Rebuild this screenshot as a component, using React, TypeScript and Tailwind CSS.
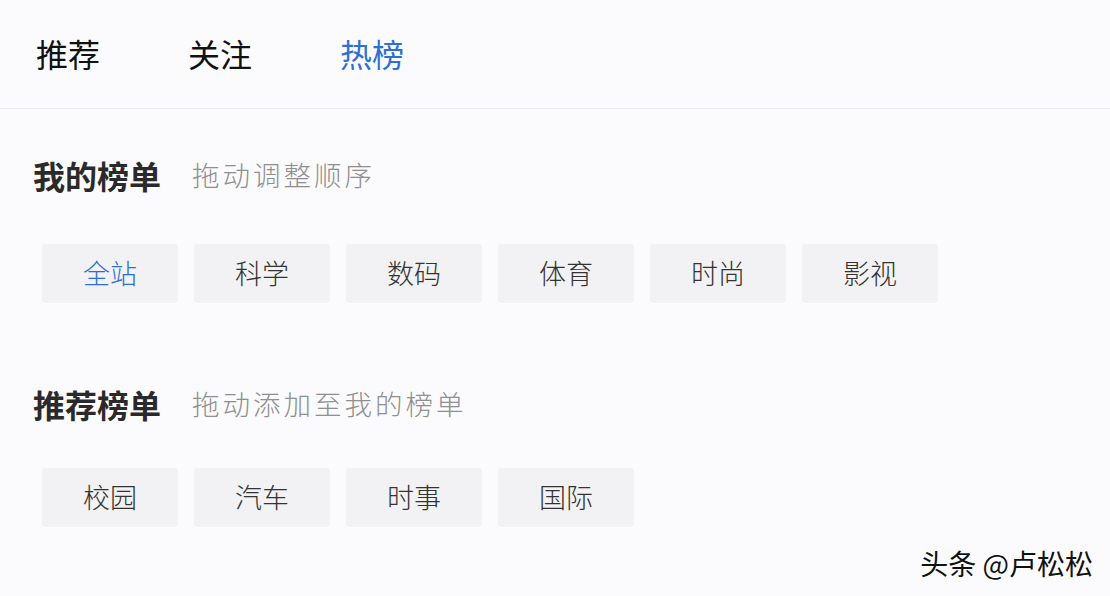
const tabs = [
  { label: "推荐", active: false },
  { label: "关注", active: false },
  { label: "热榜", active: true },
];

const mine = ["全站", "科学", "数码", "体育", "时尚", "影视"];
const recommended = ["校园", "汽车", "时事", "国际"];

const font = { fontFamily: '"Microsoft YaHei", "Noto Sans CJK SC", "Noto Sans", sans-serif' };

function Chip({ label, active }: { label: string; active?: boolean }) {
  return (
    <div
      className={`w-[136px] h-[59px] flex items-center justify-center rounded-[3px] bg-[#f2f2f4] text-[27px] font-light ${
        active ? "text-[#2f6fd2]" : "text-[#333]"
      }`}
    >
      {label}
    </div>
  );
}

function Section({
  title,
  hint,
  items,
  top,
  gap,
}: {
  title: string;
  hint: string;
  items: string[];
  top: string;
  gap: string;
}) {
  return (
    <section className={top}>
      <div className="flex items-center h-[40px] pl-[33px]">
        <h2 className="text-[32px] font-bold text-[#2a2a2a]">{title}</h2>
        <span className="ml-[31px] text-[27.5px] font-light text-[#8f8f8f] tracking-[3px]">{hint}</span>
      </div>
      <div className={`flex gap-[16px] pl-[42px] ${gap}`}>
        {items.map((item, i) => (
          <Chip key={item} label={item} active={items === mine && i === 0} />
        ))}
      </div>
    </section>
  );
}

export default function App() {
  return (
    <div className="w-[1110px] h-[596px] bg-[#fbfbfd] relative overflow-hidden" style={font}>
      <header className="h-[109px] flex items-center pl-[36px] pb-[2px] border-b border-[#ececf0]">
        {tabs.map((tab, i) => (
          <div
            key={tab.label}
            className={`text-[32px] ${tab.active ? "text-[#2f6fd2]" : "text-[#111]"} ${
              i > 0 ? "ml-[88px]" : ""
            }`}
          >
            {tab.label}
          </div>
        ))}
      </header>
      <Section title="我的榜单" hint="拖动调整顺序" items={mine} top="mt-[46px]" gap="mt-[49px]" />
      <Section title="推荐榜单" hint="拖动添加至我的榜单" items={recommended} top="mt-[81px]" gap="mt-[44px]" />
      <div
        className="absolute right-[17px] bottom-[12px] text-[28px] text-[#111] [text-shadow:1px_1px_0_#fff,-1px_-1px_0_#fff]"
      >
        头条 @卢松松
      </div>
    </div>
  );
}
